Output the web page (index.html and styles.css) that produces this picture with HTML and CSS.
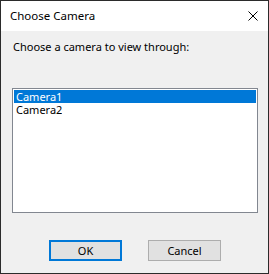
FILE: index.html
```html
<!DOCTYPE html>
<html>
<head>
<meta charset="utf-8">
<link rel="stylesheet" href="styles.css">
</head>
<body>
<div class="window">
  <div class="titlebar">
    <span class="title">Choose Camera</span>
    <svg class="close" width="10" height="10" viewBox="0 0 10 10"><path d="M0.5 0.5 L9.5 9.5 M9.5 0.5 L0.5 9.5" stroke="#000" stroke-width="1" fill="none"/></svg>
  </div>
  <div class="body">
    <div class="label">Choose a camera to view through:</div>
    <div class="listbox">
      <div class="item selected"><span class="item-text">Camera1</span></div>
      <div class="item"><span class="item-text">Camera2</span></div>
    </div>
    <div class="buttons">
      <button class="btn default">OK</button>
      <button class="btn">Cancel</button>
    </div>
  </div>
</div>
</body>
</html>
```
FILE: styles.css
```css
html, body {
  margin: 0;
  padding: 0;
}
body {
  font-family: "Noto Sans", "Open Sans", sans-serif;
  font-size: 11px;
  color: #000;
}
.window {
  width: 269px;
  height: 274px;
  box-sizing: border-box;
  border: 1px solid #2b2b2b;
  background: #f0f0f0;
  display: flex;
  flex-direction: column;
}
.titlebar {
  height: 30px;
  background: #fff;
  display: flex;
  align-items: center;
  justify-content: space-between;
  padding: 0 10px 0 9px;
}
.title {
  font-size: 11.5px;
  line-height: 16px;
}
.close {
  display: block;
}
.body {
  flex: 1;
  display: flex;
  flex-direction: column;
  padding: 8px 10px 0 11px;
}
.label {
  line-height: 16px;
  padding-left: 1px;
}
.listbox {
  margin-top: 33px;
  height: 125px;
  box-sizing: border-box;
  border: 1px solid #828790;
  background: #fff;
  padding: 1px;
}
.item {
  height: 13px;
  padding-left: 2px;
  display: flex;
  align-items: center;
}
.item-text {
  display: block;
  height: 13px;
  line-height: 13px;
  overflow: hidden;
}
.item.selected {
  background: #0078d7;
  color: #fff;
}
.buttons {
  display: flex;
  gap: 26px;
  margin-top: 27px;
  padding-left: 37px;
}
.btn {
  width: 73px;
  height: 21px;
  box-sizing: border-box;
  border: 1px solid #adadad;
  background: #e1e1e1;
  font-family: inherit;
  font-size: 11px;
  padding: 0;
  margin: 0;
  color: #000;
}
.btn.default {
  border: 2px solid #0078d7;
}
```
